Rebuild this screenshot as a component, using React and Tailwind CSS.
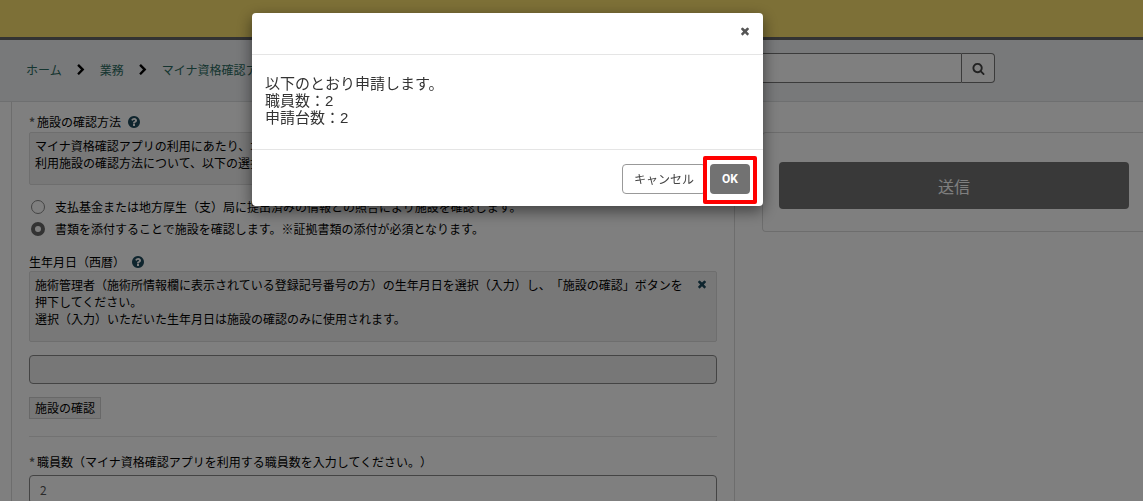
import { useState } from 'react'

const ICONS = {
  times: 'M1490 1322q0 40-28 68l-136 136q-28 28-68 28t-68-28l-294-294-294 294q-28 28-68 28t-68-28l-136-136q-28-28-28-68t28-68l294-294-294-294q-28-28-28-68t28-68l136-136q28-28 68-28t68 28l294 294 294-294q28-28 68-28t68 28l136 136q28 28 28 68t-28 68l-294 294 294 294q28 28 28 68z',
  search: 'M1216 832q0-185-131.5-316.5t-316.5-131.5-316.5 131.5-131.5 316.5 131.5 316.5 316.5 131.5 316.5-131.5 131.5-316.5zm512 832q0 52-38 90t-90 38q-54 0-90-38l-343-342q-179 124-399 124-143 0-273.5-55.5t-225-150-150-225-55.5-273.5 55.5-273.5 150-225 225-150 273.5-55.5 273.5 55.5 225 150 150 225 55.5 273.5q0 220-124 399l343 343q37 37 37 90z',
  chevron: 'M1363 877l-742 742q-19 19-45 19t-45-19l-166-166q-19-19-19-45t19-45l531-531-531-531q-19-19-19-45t19-45l166-166q19-19 45-19t45 19l742 742q19 19 19 45t-19 45z',
  help: 'M1024 1376v-192q0-14-9-23t-23-9h-192q-14 0-23 9t-9 23v192q0 14 9 23t23 9h192q14 0 23-9t9-23zm256-672q0-88-55.5-163t-138.5-116-170-41q-243 0-371 213-15 24 8 42l132 100q7 6 19 6 16 0 25-12 53-68 86-92 34-24 86-24 48 0 85.5 26t37.5 59q0 38-20 61t-68 45q-63 28-115.5 86.5t-52.5 125.5v36q0 14 9 23t23 9h192q14 0 23-9t9-23q0-19 21.5-49.5t54.5-49.5q32-18 49-28.5t46-35 44.5-48 28-60.5 12.5-81zm384 192q0 209-103 385.5t-279.5 279.5-385.5 103-385.5-103-279.5-279.5-103-385.5 103-385.5 279.5-279.5 385.5-103 385.5 103 279.5 279.5 103 385.5z',
}

function Icon({ name, className }) {
  return (
    <svg viewBox="0 0 1792 1792" fill="currentColor" aria-hidden="true" className={className}>
      <path d={ICONS[name]} />
    </svg>
  )
}

function Required() {
  return <span className="w-2 font-bold text-[#666]">*</span>
}

function HelpButton() {
  return (
    <button type="button" aria-label="ヘルプ" className="ml-[6px] text-[#1f4a5c]">
      <Icon name="help" className="size-[14px]" />
    </button>
  )
}

function Breadcrumb() {
  const items = ['ホーム', '業務', 'マイナ資格確認アプリ']
  return (
    <nav className="mb-[2px] flex-1">
      <ol className="flex items-center gap-[13px]">
        {items.map((item, i) => (
          <li key={item} className="flex items-center gap-[13px]">
            {i > 0 && <Icon name="chevron" className="size-3" />}
            <a href="#" className="text-[#2b6b60]">{item}</a>
          </li>
        ))}
      </ol>
    </nav>
  )
}

function ConfirmDialog({ staff, devices, onClose }) {
  return (
    <div className="fixed inset-0 bg-black/50">
      <div
        role="dialog"
        aria-modal="true"
        className="absolute left-[252px] top-[13px] w-[511px] rounded-sm bg-white text-[#333] shadow-[0_5px_15px_rgba(0,0,0,0.5)]"
      >
        <div className="flex h-[42px] items-center justify-end border-b border-[#e5e5e5] px-3 pb-[5px]">
          <button type="button" aria-label="閉じる" onClick={onClose} className="text-[#555]">
            <Icon name="times" className="size-3" />
          </button>
        </div>

        <div className="px-[13px] pt-5 pb-[23px] font-['Liberation_Sans','Noto_Sans_CJK_JP',sans-serif] text-[15px] leading-[17px]">
          <p>以下のとおり申請します。</p>
          <p>職員数：{staff}</p>
          <p>申請台数：{devices}</p>
        </div>

        <div className="flex justify-end gap-1 border-t border-[#e5e5e5] px-[13px] pt-[14px] pb-3">
          <button
            type="button"
            onClick={onClose}
            className="h-[30px] rounded-sm border border-[#999] px-[11px] text-[#444]"
          >
            キャンセル
          </button>
          <div className="relative">
            <button
              type="button"
              onClick={onClose}
              className="h-[30px] w-10 rounded-sm bg-[#727272] font-['Roboto',sans-serif] font-bold text-white"
            >
              OK
            </button>
            {/* Highlight frame */}
            <span className="pointer-events-none absolute -inset-x-[7px] -top-2 -bottom-[10px] rounded-xs border-4 border-[#ff0000]" />
          </div>
        </div>
      </div>
    </div>
  )
}

export default function App() {
  const [method, setMethod] = useState('document')
  const [staff, setStaff] = useState('2')
  const [open, setOpen] = useState(true)

  return (
    <div className="h-screen overflow-hidden bg-white font-['Noto_Sans_CJK_JP',sans-serif] text-xs text-black [text-spacing-trim:space-all]">
      <header className="h-10 border-b-[3px] border-[#666] bg-[#fae06e]" />

      {/* Breadcrumb and search */}
      <div className="flex h-[62px] items-center border-b border-[#dcdfe0] bg-[#f0f2f5] pr-[148px] pl-[26px]">
        <Breadcrumb />
        <form className="mb-[5px] flex w-[340px]" onSubmit={e => e.preventDefault()}>
          <input
            type="search"
            aria-label="検索"
            className="h-[30px] min-w-0 flex-1 rounded-l-sm border border-[#777] bg-white px-3"
          />
          <button
            type="submit"
            aria-label="検索"
            className="flex h-[30px] w-[33px] items-center justify-center rounded-r-sm border border-l-0 border-[#777] bg-white text-[#444]"
          >
            <Icon name="search" className="size-[13px]" />
          </button>
        </form>
      </div>

      <div className="flex items-start gap-[27px] pl-[11px]">
        {/* Form */}
        <main className="min-w-0 flex-1 border-x border-[#dadada] px-[17px] pt-3">
          <fieldset>
            <legend className="flex h-[18px] items-center pb-[2px]">
              <Required />
              施設の確認方法
              <HelpButton />
            </legend>
            <div className="h-[53px] rounded-xs border border-[#dcdcdc] bg-[#f1f1f1] px-[5px] pt-1 leading-[17px]">
              <p>マイナ資格確認アプリの利用にあたり、本施設の確認が必要です。</p>
              <p>利用施設の確認方法について、以下の選択肢から選択してください。</p>
            </div>
            <div className="mt-[11px] flex flex-col">
              <label className="flex h-[22px] items-center gap-[10px]">
                <input
                  type="radio"
                  name="method"
                  checked={method === 'match'}
                  onChange={() => setMethod('match')}
                  className="ml-[2px] size-[14px] appearance-none rounded-full border border-[#888] checked:border-4 checked:border-[#666]"
                />
                支払基金または地方厚生（支）局に提出済みの情報との照合により施設を確認します。
              </label>
              <label className="flex h-[22px] items-center gap-[10px]">
                <input
                  type="radio"
                  name="method"
                  checked={method === 'document'}
                  onChange={() => setMethod('document')}
                  className="ml-[2px] size-[14px] appearance-none rounded-full border border-[#888] checked:border-4 checked:border-[#666]"
                />
                書類を添付することで施設を確認します。※証拠書類の添付が必須となります。
              </label>
            </div>
          </fieldset>

          <div className="mt-[13px] flex h-[18px] items-center">
            <label htmlFor="birthday">生年月日（西暦）</label>
            <HelpButton />
          </div>
          <div className="flex h-[71px] items-start justify-between rounded-xs border border-[#dcdcdc] bg-[#f1f1f1] px-[5px] pt-1 leading-[17px]">
            <div>
              <p>
                施術管理者（施術所情報欄に表示されている登録記号番号の方）の生年月日を選択（入力）し、「施設の確認」ボタンを
                押下してください。
              </p>
              <p>選択（入力）いただいた生年月日は施設の確認のみに使用されます。</p>
            </div>
            <button type="button" aria-label="閉じる" className="mt-[2px] mr-[3px] ml-2 shrink-0 text-[#1f4a5c]">
              <Icon name="times" className="size-3" />
            </button>
          </div>
          <input
            id="birthday"
            type="text"
            readOnly
            className="mt-[13px] block h-[29px] w-full rounded-sm border border-[#888] bg-[#eee] px-[10px]"
          />
          <button
            type="button"
            className="mt-[13px] block h-[22px] border border-[#d0d0d0] bg-[#efefef] px-[5px]"
          >
            施設の確認
          </button>

          <hr className="mt-[17px] border-[#e5e5e5]" />

          <label htmlFor="staff" className="mt-4 flex h-[18px] items-center">
            <Required />
            職員数（マイナ資格確認アプリを利用する職員数を入力してください。）
          </label>
          <input
            id="staff"
            type="text"
            value={staff}
            onChange={e => setStaff(e.target.value)}
            className="mt-1 block h-[29px] w-full rounded-sm border border-[#888] bg-white px-[10px] text-[#555]"
          />
        </main>

        {/* Submit */}
        <aside className="mt-[30px] w-[381px] shrink-0 rounded-l-sm border border-r-0 border-[#dadada] pt-[29px] pr-[14px] pb-[22px] pl-4">
          <button
            type="button"
            onClick={() => setOpen(true)}
            className="h-[47px] w-full rounded-sm bg-[#727272] text-base text-white"
          >
            送信
          </button>
        </aside>
      </div>

      {open && <ConfirmDialog staff={staff} devices="2" onClose={() => setOpen(false)} />}
    </div>
  )
}
